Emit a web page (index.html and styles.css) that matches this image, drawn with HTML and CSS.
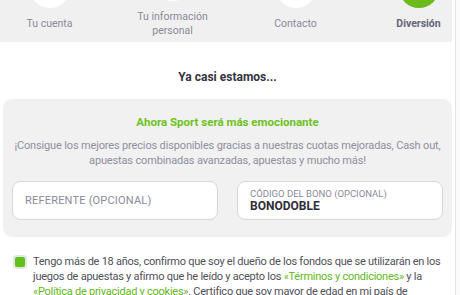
FILE: index.html
```html
<!DOCTYPE html>
<html lang="es">
<head>
<meta charset="UTF-8">
<meta name="viewport" content="width=device-width, initial-scale=1.0">
<title>Registro - Diversión</title>
<link rel="stylesheet" href="styles.css">
</head>
<body>

<div class="page">

	<div class="steps">
		<div class="step done"><i class="dot"></i><span>Tu cuenta</span></div>
		<div class="step done"><i class="dot"></i><span>Tu información<br>personal</span></div>
		<div class="step done"><i class="dot"></i><span>Contacto</span></div>
		<div class="step active"><i class="dot"></i><span>Diversión</span></div>
	</div>

	<h2 class="title">Ya casi estamos...</h2>

	<div class="promo">
		<h3 class="promo-head">Ahora Sport será más emocionante</h3>
		<p class="promo-text">¡Consigue los mejores precios disponibles gracias a nuestras cuotas mejoradas, Cash out, apuestas combinadas avanzadas, apuestas y mucho más!</p>

		<div class="fields">
			<label class="field">
				<input type="text" placeholder="REFERENTE (OPCIONAL)">
			</label>
			<label class="field filled">
				<small>CÓDIGO DEL BONO (OPCIONAL)</small>
				<input type="text" value="BONODOBLE">
			</label>
		</div>
	</div>

	<div class="agree">
		<i class="check"></i>
		<p>Tengo más de 18 años, confirmo que soy el dueño de los fondos que se utilizarán en los juegos de apuestas y afirmo que he leído y acepto los <a href="#">«Términos y condiciones»</a> y la <a href="#">«Política de privacidad y cookies»</a>. Certifico que soy mayor de edad en mi país de residencia.</p>
	</div>

</div>

</body>
</html>
```

FILE: styles.css
```css
body {
	margin: 0;
	background: #fbfbfb;
	font: normal 400 11px/15px 'Roboto', 'Open Sans', sans-serif;
	color: #555;}

.page {
	width: 452px;
	min-height: 295px;
	padding: 0 3px 0 0;
	background: #fff;
	border-right: 1px solid #e4e4e4;
	overflow: hidden;}

/* шаги */
.steps {
	display: grid;
	grid-template-columns: repeat(4, 123px);
	align-items: center;
	height: 36px;
	padding-top: 6px;
	margin-left: -12px;
	background: #f0f0f0;}

.step {
	display: flex;
	flex-direction: column;
	align-items: center;
	text-align: center;
	font-size: 10.5px;
	line-height: 14px;
	color: #8a8a9a;}

.dot {
	display: block;
	width: 40px;
	height: 40px;
	margin-top: -49px;
	margin-bottom: 9px;
	border-radius: 50%;
	background: #fff;}

.active span {font-weight: 700; color: #656578;}
.active .dot {background: #6cbb1c;}

.title {
	margin: 28px 0 0 3px;
	font-size: 12px;
	line-height: 15px;
	font-weight: 700;
	text-align: center;
	color: #33333d;}

/* промо блок */
.promo {
	margin: 14px 0 0 3px;
	padding: 15px 9px 17px;
	border-radius: 9px;
	background: #f1f1f1;
	text-align: center;}

.promo-head {
	margin: 0;
	font-size: 11.5px;
	line-height: 16px;
	font-weight: 700;
	color: #6cc21b;}

.promo-text {
	margin: 8px 0 0;
	color: #8f8f9e;
	letter-spacing: -0.15px;}

.fields {
	display: grid;
	grid-template-columns: 1fr 1fr;
	gap: 19px;
	margin-top: 13px;
	text-align: left;}

.field {
	display: flex;
	flex-direction: column;
	justify-content: center;
	height: 37px;
	padding: 0 12px;
	border: 1px solid #d9d9d9;
	border-radius: 8px;
	background: #fff;
	box-shadow: inset 0 0 2px rgba(0,0,0,.08);}

.field input {
	width: 100%;
	padding: 0;
	border: none;
	outline: none;
	background: none;
	font: normal 400 11px/14px 'Roboto', sans-serif;
	color: #8a8a9a;}

.field input::placeholder {color: #8a8a9a; letter-spacing: 0.2px;}

.field small {
	font-size: 9.5px;
	line-height: 11px;
	color: #8a8a9a;}

.filled input {
	font-weight: 700;
	font-size: 12px;
	color: #2e2e36;}

/* согласие */
.agree {
	display: flex;
	align-items: flex-start;
	gap: 6px;
	margin: 17px 0 0 13px;}

.check {
	flex: none;
	width: 10px;
	height: 10px;
	margin-top: 1px;
	border: 2px solid #e3e3e3;
	border-radius: 4px;
	background: #62c01a;}

.agree p {
	margin: 0;
	color: #505058;
	letter-spacing: -0.25px;}

.agree a {color: #62b81a; text-decoration: none;}
```
